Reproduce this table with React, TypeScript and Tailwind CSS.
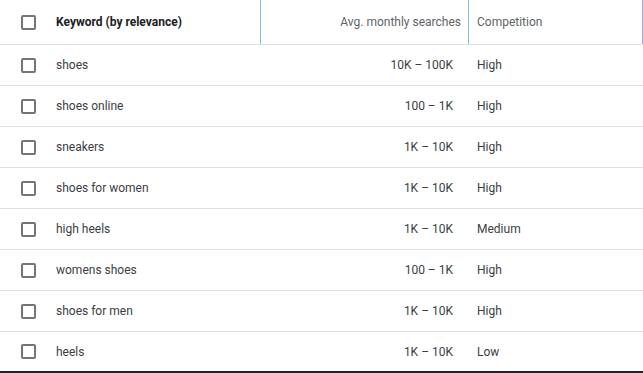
import React from 'react'

type Row = { keyword: string; searches: string; competition: string }

const rows: Row[] = [
  { keyword: 'shoes', searches: '10K – 100K', competition: 'High' },
  { keyword: 'shoes online', searches: '100 – 1K', competition: 'High' },
  { keyword: 'sneakers', searches: '1K – 10K', competition: 'High' },
  { keyword: 'shoes for women', searches: '1K – 10K', competition: 'High' },
  { keyword: 'high heels', searches: '1K – 10K', competition: 'Medium' },
  { keyword: 'womens shoes', searches: '100 – 1K', competition: 'High' },
  { keyword: 'shoes for men', searches: '1K – 10K', competition: 'High' },
  { keyword: 'heels', searches: '1K – 10K', competition: 'Low' },
]

function Checkbox() {
  return <span className="block w-[15px] h-[15px] border-2 border-[#757575] rounded-[2px] shrink-0" />
}

export default function App() {
  return (
    <div className="w-[643px] h-[373px] overflow-hidden bg-white font-['Roboto',sans-serif] text-[12px]">
      {/* Header row */}
      <div className="grid grid-cols-[260px_208px_1fr] h-[45px] border-b border-[#e0e0e0]">
        <div className="flex items-center">
          <div className="w-[56px] flex pl-[21px]">
            <Checkbox />
          </div>
          <span className="font-bold text-[#202124]">Keyword (by relevance)</span>
        </div>
        <div className="flex items-center justify-end pr-[7px] border-l border-[#8ab4f8] text-[#5f6368]">
          Avg. monthly searches
        </div>
        <div className="flex items-center pl-[8px] border-l border-r border-[#8ab4f8] text-[#5f6368]">
          Competition
        </div>
      </div>

      {/* Body rows */}
      {rows.map((row, i) => {
        const last = i === rows.length - 1
        return (
          <div
            key={row.keyword}
            className={`grid grid-cols-[260px_208px_1fr] text-[#3c4043] ${
              last ? 'h-[41px] border-b-2 border-[#202124]' : 'h-[41px] border-b border-[#e0e0e0]'
            }`}
          >
            <div className="flex items-center">
              <div className="w-[56px] flex pl-[21px]">
                <Checkbox />
              </div>
              <span>{row.keyword}</span>
            </div>
            <div className="flex items-center justify-end pr-[15px]">{row.searches}</div>
            <div className="flex items-center pl-[9px]">{row.competition}</div>
          </div>
        )
      })}
    </div>
  )
}
